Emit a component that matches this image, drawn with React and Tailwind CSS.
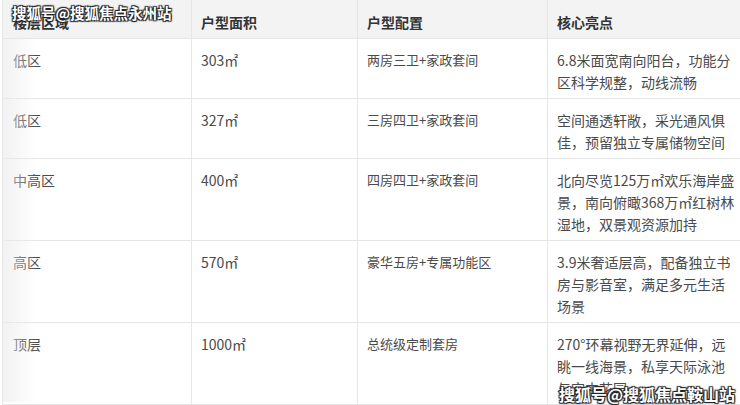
import React from "react";

const rows = [
  ["低区", "303㎡", "两房三卫+家政套间", "6.8米面宽南向阳台，功能分区科学规整，动线流畅"],
  ["低区", "327㎡", "三房四卫+家政套间", "空间通透轩敞，采光通风俱佳，预留独立专属储物空间"],
  ["中高区", "400㎡", "四房四卫+家政套间", "北向尽览125万㎡欢乐海岸盛景，南向俯瞰368万㎡红树林湿地，双景观资源加持"],
  ["高区", "570㎡", "豪华五房+专属功能区", "3.9米奢适层高，配备独立书房与影音室，满足多元生活场景"],
  ["顶层", "1000㎡", "总统级定制套房", "270°环幕视野无界延伸，远眺一线海景，私享天际泳池与空中花园"],
];

const cols = "grid grid-cols-[189px_166px_190px_204px]";
const shadow =
  "0 0 1px #222, 1px 1px 1px #222, -1px -1px 1px #222, 1px -1px 1px #222, -1px 1px 1px #222";

export default function App() {
  return (
    <div
      className="relative w-[740px] h-[405px] overflow-hidden bg-white pl-[2px]"
      style={{ fontFamily: '"Noto Sans CJK SC", "Noto Sans", sans-serif' }}
    >
      <div className="w-[751px] border-l border-b border-[#e6e6e6]">
        <div className={`${cols} bg-[#f3f3f4] border-b border-[#e6e6e6] text-[14px] leading-[22px] font-bold text-[#333]`}>
          <div className="pl-[10px] pr-[10px] pt-[11px] pb-[5px] border-r border-[#e6e6e6]">楼层区域</div>
          <div className="pl-[9px] pr-[10px] pt-[11px] pb-[5px] border-r border-[#e6e6e6]">户型面积</div>
          <div className="pl-[9px] pr-[10px] pt-[11px] pb-[5px] border-r border-[#e6e6e6]">户型配置</div>
          <div className="pl-[9px] pr-[10px] pt-[11px] pb-[5px]">核心亮点</div>
        </div>
        {rows.map((r, i) => (
          <div
            key={i}
            className={`${cols} text-[14px] leading-[22px] text-[#4a4a4a] ${i < rows.length - 1 ? "border-b border-[#e6e6e6]" : ""}`}
          >
            <div className="pl-[10px] pr-[10px] pt-[10px] pb-[5px] border-r border-[#e6e6e6]">{r[0]}</div>
            <div className="pl-[9px] pr-[10px] pt-[10px] pb-[5px] border-r border-[#e6e6e6]">{r[1]}</div>
            <div className="pl-[9px] pr-[10px] pt-[10px] pb-[5px] border-r border-[#e6e6e6] text-[13px]">{r[2]}</div>
            <div className="pl-[9px] pr-[14px] pt-[10px] pb-[5px]">{r[3]}</div>
          </div>
        ))}
      </div>

      <div className="pointer-events-none absolute left-[3px] top-[39px] bottom-[3px] w-[34px] bg-gradient-to-r from-[#ececec] to-transparent opacity-70" />

      <div
        className="absolute left-[12px] top-[3px] text-[14.5px] leading-[20px] font-bold text-white"
        style={{ textShadow: shadow }}
      >
        搜狐号@搜狐焦点永州站
      </div>
      <div
        className="absolute right-[5px] bottom-[1px] text-[16px] leading-[20px] font-bold text-white"
        style={{ textShadow: shadow }}
      >
        搜狐号@搜狐焦点鞍山站
      </div>
    </div>
  );
}
